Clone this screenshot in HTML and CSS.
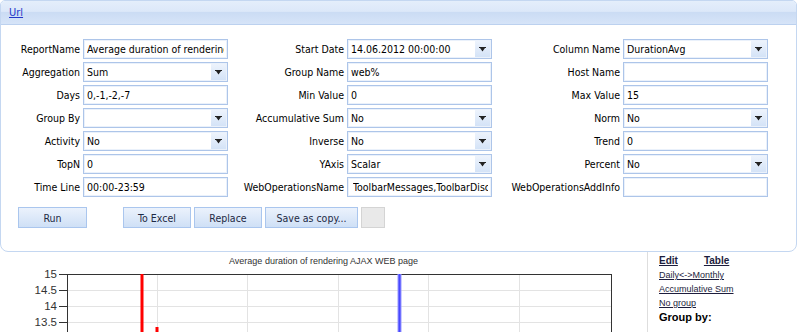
FILE: index.html
```html
<!DOCTYPE html>
<html lang="en">
<head>
    <meta charset="UTF-8">
    <title>Report</title>
    <link rel="stylesheet" href="styles.css">
</head>
<body>
    <div class="panel">
        <div class="panel-header"><a href="#">Url</a></div>
        <div class="panel-body">
            <!-- Report parameters -->
            <div class="form-grid">
                <label class="lbl">ReportName</label>
                <input class="field" type="text" value="Average duration of rendering AJAX WEB page">
                <label class="lbl">Start Date</label>
                <div class="combo"><input type="text" value="14.06.2012 00:00:00"><span class="combo-btn"><svg width="7" height="5" viewBox="0 0 7 5"><path d="M0 0h7v1H0zM1 1h5L3.5 4.5z" fill="#222"/></svg></span></div>
                <label class="lbl">Column Name</label>
                <div class="combo"><input type="text" value="DurationAvg"><span class="combo-btn"><svg width="7" height="5" viewBox="0 0 7 5"><path d="M0 0h7v1H0zM1 1h5L3.5 4.5z" fill="#222"/></svg></span></div>

                <label class="lbl">Aggregation</label>
                <div class="combo"><input type="text" value="Sum"><span class="combo-btn"><svg width="7" height="5" viewBox="0 0 7 5"><path d="M0 0h7v1H0zM1 1h5L3.5 4.5z" fill="#222"/></svg></span></div>
                <label class="lbl">Group Name</label>
                <input class="field" type="text" value="web%">
                <label class="lbl">Host Name</label>
                <input class="field" type="text" value="">

                <label class="lbl">Days</label>
                <input class="field" type="text" value="0,-1,-2,-7">
                <label class="lbl">Min Value</label>
                <input class="field" type="text" value="0">
                <label class="lbl">Max Value</label>
                <input class="field" type="text" value="15">

                <label class="lbl">Group By</label>
                <div class="combo"><input type="text" value=""><span class="combo-btn"><svg width="7" height="5" viewBox="0 0 7 5"><path d="M0 0h7v1H0zM1 1h5L3.5 4.5z" fill="#222"/></svg></span></div>
                <label class="lbl">Accumulative Sum</label>
                <div class="combo"><input type="text" value="No"><span class="combo-btn"><svg width="7" height="5" viewBox="0 0 7 5"><path d="M0 0h7v1H0zM1 1h5L3.5 4.5z" fill="#222"/></svg></span></div>
                <label class="lbl">Norm</label>
                <div class="combo"><input type="text" value="No"><span class="combo-btn"><svg width="7" height="5" viewBox="0 0 7 5"><path d="M0 0h7v1H0zM1 1h5L3.5 4.5z" fill="#222"/></svg></span></div>

                <label class="lbl">Activity</label>
                <div class="combo"><input type="text" value="No"><span class="combo-btn"><svg width="7" height="5" viewBox="0 0 7 5"><path d="M0 0h7v1H0zM1 1h5L3.5 4.5z" fill="#222"/></svg></span></div>
                <label class="lbl">Inverse</label>
                <div class="combo"><input type="text" value="No"><span class="combo-btn"><svg width="7" height="5" viewBox="0 0 7 5"><path d="M0 0h7v1H0zM1 1h5L3.5 4.5z" fill="#222"/></svg></span></div>
                <label class="lbl">Trend</label>
                <input class="field" type="text" value="0">

                <label class="lbl">TopN</label>
                <input class="field" type="text" value="0">
                <label class="lbl">YAxis</label>
                <div class="combo"><input type="text" value="Scalar"><span class="combo-btn"><svg width="7" height="5" viewBox="0 0 7 5"><path d="M0 0h7v1H0zM1 1h5L3.5 4.5z" fill="#222"/></svg></span></div>
                <label class="lbl">Percent</label>
                <div class="combo"><input type="text" value="No"><span class="combo-btn"><svg width="7" height="5" viewBox="0 0 7 5"><path d="M0 0h7v1H0zM1 1h5L3.5 4.5z" fill="#222"/></svg></span></div>

                <label class="lbl">Time Line</label>
                <input class="field" type="text" value="00:00-23:59">
                <label class="lbl">WebOperationsName</label>
                <input class="field wide-pad" type="text" value="ToolbarMessages,ToolbarDiscussions">
                <label class="lbl">WebOperationsAddInfo</label>
                <input class="field" type="text" value="">
            </div>

            <!-- Actions -->
            <div class="actions">
                <button class="btn btn-run">Run</button>
                <button class="btn btn-excel">To Excel</button>
                <button class="btn btn-replace">Replace</button>
                <button class="btn btn-save">Save as copy...</button>
                <button class="btn btn-blank"></button>
            </div>
        </div>
    </div>

    <div class="report">
        <div class="chart">
            <div class="chart-title">Average duration of rendering AJAX WEB page</div>
            <svg class="chart-plot" width="647" height="80" viewBox="0 0 647 80">
                <g fill="#333" font-family="Liberation Sans, Arial, sans-serif" font-size="11.5" text-anchor="end">
                    <text x="57" y="11">15</text>
                    <text x="57" y="27">14.5</text>
                    <text x="57" y="43">14</text>
                    <text x="57" y="59">13.5</text>
                </g>
                <g stroke="#e3e3e3" stroke-width="1">
                    <line x1="68" y1="23.5" x2="611" y2="23.5"/>
                    <line x1="68" y1="39.5" x2="611" y2="39.5"/>
                    <line x1="68" y1="55.5" x2="611" y2="55.5"/>
                    <line x1="68" y1="71.5" x2="611" y2="71.5"/>
                    <line x1="157.5" y1="8" x2="157.5" y2="80"/>
                    <line x1="247.5" y1="8" x2="247.5" y2="80"/>
                    <line x1="338.5" y1="8" x2="338.5" y2="80"/>
                    <line x1="428.5" y1="8" x2="428.5" y2="80"/>
                    <line x1="519.5" y1="8" x2="519.5" y2="80"/>
                </g>
                <g stroke="#333" stroke-width="1">
                    <line x1="59" y1="7.5" x2="67" y2="7.5"/>
                    <line x1="59" y1="23.5" x2="67" y2="23.5"/>
                    <line x1="59" y1="39.5" x2="67" y2="39.5"/>
                    <line x1="59" y1="55.5" x2="67" y2="55.5"/>
                    <line x1="59" y1="71.5" x2="67" y2="71.5"/>
                    <rect x="67.5" y="7.5" width="544" height="120" fill="none"/>
                </g>
                <rect x="140.5" y="7" width="3" height="80" fill="#f00"/>
                <rect x="155.5" y="60" width="3" height="30" fill="#f00"/>
                <rect x="397.5" y="7" width="4" height="80" fill="#9a9aff"/>
                <rect x="398.5" y="7" width="2" height="80" fill="#4747ff"/>
            </svg>
        </div>
        <div class="side">
            <div class="side-top">
                <a href="#" class="strong">Edit</a>
                <a href="#" class="strong">Table</a>
            </div>
            <a href="#" class="side-link">Daily&lt;-&gt;Monthly</a>
            <a href="#" class="side-link">Accumulative Sum</a>
            <a href="#" class="side-link">No group</a>
            <div class="side-head">Group by:</div>
        </div>
    </div>
</body>
</html>
```

FILE: styles.css
```css
body {
    margin: 0;
    font-family: "DejaVu Sans Condensed", "DejaVu Sans", sans-serif;
    font-stretch: condensed;
    font-size: 10.5px;
    color: #000;
    background: #fff;
}

/* Parameters panel */
.panel {
    width: 797px;
    box-sizing: border-box;
    border: 1px solid #c4d7f1;
    border-radius: 5px 5px 8px 8px;
    overflow: hidden;
}

.panel-header {
    height: 23px;
    display: flex;
    align-items: center;
    padding-left: 8px;
    border-bottom: 1px solid #bcd1ef;
    background: linear-gradient(#e4eefb 0%, #dce8f9 45%, #cbdcf4 50%, #d6e4f8 100%);
}

.panel-header a {
    color: #2337c9;
    font-size: 11px;
}

.panel-body {
    padding: 14px 0 23px 0;
}

.form-grid {
    display: grid;
    grid-template-columns: 79px 145px 113px 145px 125px 145px;
    grid-auto-rows: 20px;
    column-gap: 3px;
    row-gap: 3px;
}

.lbl {
    align-self: center;
    text-align: right;
    white-space: nowrap;
}

.field,
.combo {
    box-sizing: border-box;
    height: 20px;
    border: 1px solid #adc5e9;
    box-shadow: inset 0 0 0 1px #eaf1fb;
    background: #fff;
}

.field {
    width: 100%;
    padding: 0 3px;
    font: inherit;
    color: #000;
    outline: none;
}

.field.wide-pad {
    padding-left: 5px;
}

.combo {
    display: flex;
}

.combo input {
    flex: 1;
    min-width: 0;
    border: 0;
    padding: 0 3px;
    background: transparent;
    font: inherit;
    color: #000;
    outline: none;
}

.combo-btn {
    width: 15px;
    margin: 1px;
    display: flex;
    align-items: center;
    justify-content: center;
    background: linear-gradient(#edf3fc, #d4e3f7);
}

/* Buttons */
.actions {
    display: flex;
    gap: 3px;
    margin-top: 10px;
    padding-left: 17px;
}

.btn {
    height: 21px;
    box-sizing: border-box;
    padding: 0;
    border: 1px solid #aac6ee;
    background: linear-gradient(#ebf2fc 0%, #dde9f9 50%, #cfe0f6 100%);
    font: inherit;
    color: #1e2a44;
}

.btn-run { width: 69px; margin-right: 33px; }
.btn-excel { width: 68px; }
.btn-replace { width: 68px; }
.btn-save { width: 93px; }

.btn-blank {
    width: 24px;
    border-color: #d4d4d4;
    background: #e9e9e9;
}

/* Report output */
.report {
    display: flex;
}

.chart {
    width: 647px;
}

.chart-title {
    margin-top: 4px;
    line-height: 11px;
    text-align: center;
    font-family: "Liberation Sans", Arial, sans-serif;
    font-size: 9px;
    color: #333;
}

.chart-plot {
    display: block;
}

.side {
    display: flex;
    flex-direction: column;
    align-items: flex-start;
    padding: 2px 0 0 11px;
    border-left: 1px solid #dedede;
    font-family: "Liberation Sans", Arial, sans-serif;
    font-size: 9px;
    line-height: 14px;
}

.side a {
    color: #1d1d3d;
}

.side-top {
    display: flex;
    gap: 26px;
}

.side-top .strong {
    font-weight: bold;
    font-size: 10px;
}

.side-head {
    font-weight: bold;
    font-size: 11px;
}
```
